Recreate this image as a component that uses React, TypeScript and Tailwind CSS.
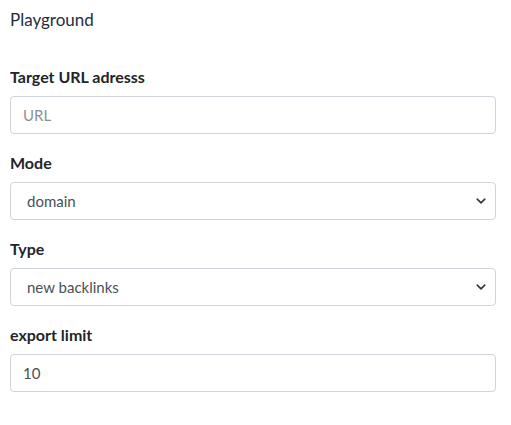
import React, { useState } from 'react';

const ChevronDown = () => (
  <svg
    className="pointer-events-none absolute right-[10px] top-1/2 h-[10px] w-[10px] -translate-y-1/2"
    viewBox="0 0 16 16"
    fill="none"
    stroke="#343a40"
    strokeWidth="2.6"
    strokeLinecap="round"
    strokeLinejoin="round"
  >
    <path d="M2 5l6 6 6-6" />
  </svg>
);

const App: React.FC = () => {
  const [url, setUrl] = useState('');
  const [mode, setMode] = useState('domain');
  const [type, setType] = useState('new backlinks');
  const [limit, setLimit] = useState('10');

  return (
    <div className="min-h-screen bg-white px-[10px] pt-[8px] font-['Lato',sans-serif] text-[#212529]">
      {/* Header */}
      <h1 className="text-[17px] leading-[24px] text-[#1f2d3d]">Playground</h1>

      <form className="mt-[34px] w-[486px]" onSubmit={(e) => e.preventDefault()}>
        {/* Target URL */}
        <div className="mb-[18px]">
          <label htmlFor="target-url" className="mb-[8px] block text-[16px] font-bold leading-[22px]">
            Target URL adresss
          </label>
          <input
            id="target-url"
            value={url}
            onChange={(e) => setUrl(e.target.value)}
            placeholder="URL"
            className="block h-[38px] w-full rounded-[4px] border border-[#ced4da] px-[12px] text-[15px] text-[#495057] outline-none placeholder:text-[#8a9299]"
          />
        </div>

        {/* Mode */}
        <div className="mb-[18px]">
          <label htmlFor="mode" className="mb-[8px] block text-[16px] font-bold leading-[22px]">
            Mode
          </label>
          <div className="relative">
            <select
              id="mode"
              value={mode}
              onChange={(e) => setMode(e.target.value)}
              className="block h-[38px] w-full appearance-none rounded-[4px] border border-[#ced4da] bg-white pl-[16px] pr-[30px] text-[15px] text-[#495057] outline-none"
            >
              <option value="domain">domain</option>
              <option value="prefix">prefix</option>
              <option value="exact">exact</option>
            </select>
            <ChevronDown />
          </div>
        </div>

        {/* Type */}
        <div className="mb-[18px]">
          <label htmlFor="type" className="mb-[8px] block text-[16px] font-bold leading-[22px]">
            Type
          </label>
          <div className="relative">
            <select
              id="type"
              value={type}
              onChange={(e) => setType(e.target.value)}
              className="block h-[38px] w-full appearance-none rounded-[4px] border border-[#ced4da] bg-white pl-[16px] pr-[30px] text-[15px] text-[#495057] outline-none"
            >
              <option value="new backlinks">new backlinks</option>
              <option value="lost backlinks">lost backlinks</option>
              <option value="all backlinks">all backlinks</option>
            </select>
            <ChevronDown />
          </div>
        </div>

        {/* Export limit */}
        <div>
          <label htmlFor="limit" className="mb-[8px] block text-[16px] font-bold leading-[22px]">
            export limit
          </label>
          <input
            id="limit"
            value={limit}
            onChange={(e) => setLimit(e.target.value)}
            className="block h-[38px] w-full rounded-[4px] border border-[#ced4da] px-[12px] text-[15px] text-[#495057] outline-none"
          />
        </div>
      </form>
    </div>
  );
};

export default App;
